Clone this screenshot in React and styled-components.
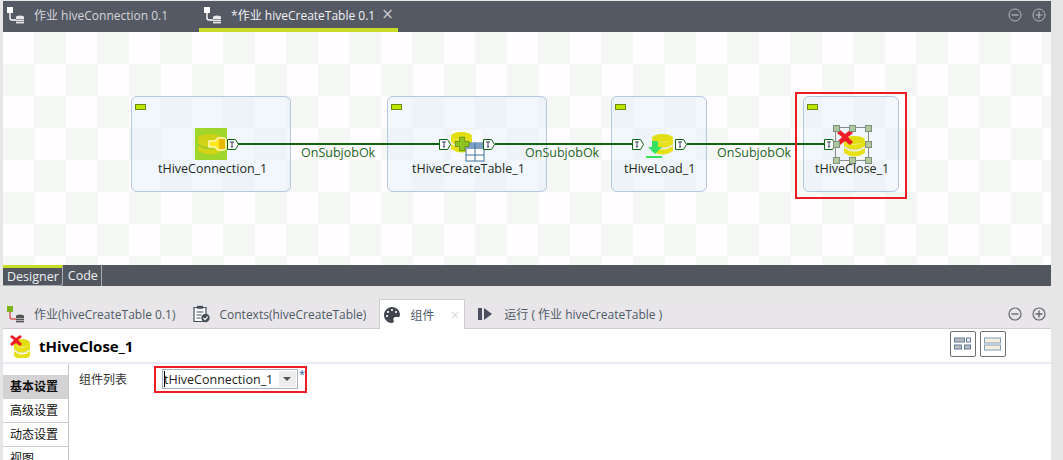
import styled, { createGlobalStyle } from 'styled-components';
import { FaPalette } from 'react-icons/fa';

const GlobalStyle = createGlobalStyle`
    html, body {
        margin: 0;
        padding: 0;
        background: #e6e6e6;
        overflow: hidden;
    }
`;

const FONT = `"Open Sans", "Noto Sans CJK SC", sans-serif`;

const Page = styled.div`
    width: 1063px;
    height: 460px;
    overflow: hidden;
    padding: 1px 12px 0 3px;
    box-sizing: border-box;
    display: flex;
    flex-direction: column;
    font-family: ${FONT};
    font-size: 12px;
`;

const EditorTabs = styled.div`
    height: 31px;
    flex: none;
    background: #555964;
    display: flex;
    align-items: stretch;
    position: relative;
`;

const EditorTab = styled.div`
    display: flex;
    align-items: center;
    gap: 10px;
    box-sizing: border-box;
    padding: ${p => (p.$active ? '0 4px 4px 5px' : '0 31px 4px 4px')};
    color: ${p => (p.$active ? '#f2f3f5' : '#d4d6da')};
    border-bottom: 4px solid ${p => (p.$active ? '#c8dc28' : 'transparent')};
    white-space: nowrap;
    height: 31px;
    padding-bottom: 0;
`;

const CloseMark = styled.span`
    color: ${p => p.$color};
    font-size: 15px;
    line-height: 1;
    margin-left: -4px;
    font-family: "DejaVu Sans", sans-serif;
`;

const WindowButtons = styled.div`
    margin-left: auto;
    display: flex;
    align-items: center;
    gap: 10px;
    padding: 0 5px 3px 0;
`;

const Canvas = styled.div`
    height: 233px;
    flex: none;
    position: relative;
    background-color: #fffdff;
    background-image: conic-gradient(#f5f7f5 25%, transparent 0 50%, #f5f7f5 0 75%, transparent 0);
    background-size: 63px 64px;
`;

const Node = styled.div`
    position: absolute;
    left: ${p => p.$x - 3}px;
    top: 64px;
    width: ${p => p.$w}px;
    height: 96px;
    box-sizing: border-box;
    border: 1px solid #b4c7dc;
    border-radius: 6px;
    background: rgba(232, 240, 252, 0.55);
`;

const Collapse = styled.span`
    position: absolute;
    left: 3px;
    top: 7px;
    width: 9px;
    height: 4px;
    background: #bce600;
    border: 1px solid #6d8a10;
`;

const NodeLabel = styled.div`
    position: absolute;
    left: ${p => p.$x - 3}px;
    top: 128px;
    line-height: 18px;
    font-size: 12.5px;
    color: #1c2a22;
    white-space: nowrap;
`;

const Link = styled.div`
    position: absolute;
    left: ${p => p.$x - 3}px;
    top: 111px;
    width: ${p => p.$w}px;
    height: 2px;
    background: #0f6410;
`;

const LinkLabel = styled.div`
    position: absolute;
    left: ${p => p.$x - 3}px;
    top: 112px;
    line-height: 18px;
    font-size: 12.5px;
    color: #1f641f;
    white-space: nowrap;
`;

const Port = styled.svg`
    position: absolute;
    left: ${p => p.$x - 3}px;
    top: 106px;
`;

const CanvasIcon = styled.svg`
    position: absolute;
    left: ${p => p.$x - 3}px;
    top: ${p => p.$y - 32}px;
`;

const Selection = styled.div`
    position: absolute;
    left: 832px;
    top: 95px;
    width: 32px;
    height: 32px;
    border: 1px solid #8a8a8a;
`;

const Handle = styled.span`
    position: absolute;
    left: ${p => p.$l}px;
    top: ${p => p.$t}px;
    width: 5px;
    height: 5px;
    background: #b0c8a0;
    border: 1px solid #7f8f7a;
`;

const RedFrame = styled.div`
    position: absolute;
    left: 792px;
    top: 60px;
    width: 112px;
    height: 107px;
    box-sizing: border-box;
    border: 2px solid #ec1c24;
`;

const DesignerBar = styled.div`
    height: 21px;
    flex: none;
    background: #52575f;
    display: flex;
    color: #eef0f2;
    font-size: 12.5px;
`;

const DesignerTab = styled.div`
    box-sizing: border-box;
    height: 21px;
    display: flex;
    align-items: center;
    padding: ${p => (p.$active ? '0 3px 0 4px' : '0 3px 0 5px')};
    border-top: ${p => (p.$active ? '3px solid #c8dc28' : '0')};
    border-right: 1px solid #a8acb2;
    border-bottom: ${p => (p.$active ? '1px solid #a8acb2' : '0')};
    border-bottom-right-radius: ${p => (p.$active ? '3px' : '0')};
`;

const LowerPanel = styled.div`
    margin-top: 13px;
    flex: 1;
    min-height: 0;
    display: flex;
    flex-direction: column;
    background: #fff;
`;

const ViewTabs = styled.div`
    height: 30px;
    flex: none;
    box-sizing: border-box;
    background: #e9e6e9;
    border-bottom: 1px solid #cfcdd1;
    display: flex;
    color: #4e5a68;
`;

const ViewTab = styled.div`
    display: flex;
    align-items: center;
    gap: ${p => p.$gap}px;
    margin-right: ${p => p.$mr}px;
    margin-left: ${p => p.$ml || 0}px;
    padding: ${p => p.$pad};
    white-space: nowrap;
    box-sizing: border-box;
    height: 30px;
    ${p => p.$active && `
        background: #fff;
        border: 1px solid #cfcdd1;
        border-bottom: 0;
    `}
`;

const Palette = styled(FaPalette)`
    width: 16px;
    height: 16px;
    color: #42464f;
`;

const FadedClose = styled.span`
    color: #dcdcdc;
    font-size: 13px;
    margin-left: 5px;
    font-family: "DejaVu Sans", sans-serif;
`;

const ViewButtons = styled.div`
    margin-left: auto;
    display: flex;
    align-items: center;
    gap: 10px;
    padding-right: 5px;
`;

const TitleRow = styled.div`
    height: 33px;
    flex: none;
    display: flex;
    align-items: center;
    gap: 6px;
    padding-left: 7px;
    border-bottom: 2px solid #e8eaf6;
`;

const Title = styled.div`
    font-weight: 700;
    font-size: 15px;
    color: #000;
`;

const LayoutButtons = styled.div`
    margin-left: auto;
    display: flex;
    gap: 4px;
    padding-right: 45px;
    margin-top: -4px;
`;

const LayoutButton = styled.div`
    width: 24px;
    height: 24px;
    border: 1px solid #6f6f6f;
    border-radius: 2px;
    display: flex;
    align-items: center;
    justify-content: center;
`;

const Body = styled.div`
    flex: 1;
    display: flex;
    min-height: 0;
`;

const SideNav = styled.div`
    width: 66px;
    flex: none;
    box-sizing: border-box;
    border-right: 1px solid #c8c8c8;
    padding-top: 11px;
`;

const SideItem = styled.div`
    height: 24px;
    box-sizing: border-box;
    padding-left: 7px;
    line-height: 23px;
    border-bottom: 1px solid #cfcfcf;
    color: #111;
    font-weight: ${p => (p.$active ? 700 : 400)};
    background: ${p => (p.$active ? '#d4d2d4' : '#fff')};
`;

const Form = styled.div`
    display: flex;
    align-items: flex-start;
    gap: 27px;
    padding: 2px 0 0 10px;
`;

const FieldLabel = styled.div`
    color: #333;
    line-height: 27px;
    margin-top: 0;
`;

const FieldFrame = styled.div`
    width: 153px;
    height: 27px;
    box-sizing: border-box;
    border: 2px solid #ec1c24;
    padding: 1px 0 0 6px;
    display: flex;
`;

const Combo = styled.div`
    width: 139px;
    height: 20px;
    box-sizing: border-box;
    border: 1px solid #a8b0bc;
    display: flex;
    align-items: center;
    padding: 0 1px 0 1px;
    color: #222;
    font-size: 12.5px;
`;

const Caret = styled.span`
    width: 1px;
    height: 16px;
    background: #000;
    flex: none;
    margin-right: -1px;
`;

const ComboArrow = styled.div`
    margin-left: auto;
    width: 17px;
    height: 16px;
    background: #ececec;
    display: flex;
    align-items: center;
    justify-content: center;
    &::after {
        content: '';
        border-left: 4px solid transparent;
        border-right: 4px solid transparent;
        border-top: 4px solid #555;
    }
`;

const Star = styled.span`
    color: #2a5fa8;
    font-size: 11px;
    line-height: 10px;
    margin-left: 1px;
`;

function JobIcon({ color = '#fff', link = '#fff', disk = '#e8e8e8' }) {
    return (
        <svg width="17" height="18" viewBox="0 0 17 18">
            <rect x="0" y="1" width="6" height="6" fill={color} />
            <path d="M3 7v5q0 2 2 2h4" stroke={link} strokeWidth="1.4" fill="none" />
            <ellipse cx="13" cy="11" rx="4" ry="1.6" fill={disk} />
            <rect x="9" y="11" width="8" height="2" fill={disk} />
            <rect x="9" y="13.6" width="8" height="1.6" fill={disk} />
            <rect x="9" y="15.8" width="8" height="1.6" fill={disk} />
        </svg>
    );
}

function RoundButton({ kind, color, fill = 'none', width = 1 }) {
    return (
        <svg width="14" height="14" viewBox="0 0 14 14">
            <circle cx="7" cy="7" r="6" stroke={color} strokeWidth={width} fill={fill} />
            <path d={kind === 'plus' ? 'M3.5 7h7M7 3.5v7' : 'M3.5 7h7'} stroke={color} strokeWidth={width + 0.2} />
        </svg>
    );
}

function Db({ size = 22, top = '#e2de10', mid = '#e6e015', dark = '#b8b40a' }) {
    return (
        <g>
            <ellipse cx={size / 2} cy="5" rx={size / 2} ry="4" fill={top} />
            <path d={`M0 6q${size / 2} 7 ${size} 0v5q-${size / 2} 7 -${size} 0z`} fill={mid} />
            <path d={`M0 11q${size / 2} 7 ${size} 0v1q-${size / 2} 7 -${size} 0z`} fill={dark} opacity="0.35" />
            <path d={`M0 13q${size / 2} 7 ${size} 0v5q-${size / 2} 7 -${size} 0z`} fill={mid} />
        </g>
    );
}

function PortMark({ x }) {
    return (
        <Port $x={x} width="13" height="13" viewBox="0 0 13 13">
            <path d="M.5 1.5h8l3 5-3 5h-8z" fill="#fff" stroke="#0f6410" />
            <path d="M3 4h4M5 4v5M4 9h2" stroke="#22304a" strokeWidth="0.9" fill="none" />
        </Port>
    );
}

const HANDLES = [
    [-3, -3], [13, -3], [29, -3],
    [-3, 13], [29, 13],
    [-3, 29], [13, 29], [29, 29],
];

export default function App() {
    return (
        <Page>
            <GlobalStyle />
            <EditorTabs>
                <EditorTab>
                    <JobIcon />
                    <span>作业 hiveConnection 0.1</span>
                </EditorTab>
                <EditorTab $active>
                    <JobIcon />
                    <span>*作业 hiveCreateTable 0.1</span>
                    <CloseMark $color="#c8cad0">×</CloseMark>
                </EditorTab>
                <WindowButtons>
                    <RoundButton kind="minus" color="#b4b7be" />
                    <RoundButton kind="plus" color="#b4b7be" />
                </WindowButtons>
            </EditorTabs>

            <Canvas>
                <Node $x={131} $w={160}><Collapse /></Node>
                <Node $x={387} $w={160}><Collapse /></Node>
                <Node $x={611} $w={96}><Collapse /></Node>
                <Node $x={803} $w={96}><Collapse /></Node>

                <Link $x={238} $w={202} />
                <Link $x={495} $w={138} />
                <Link $x={687} $w={138} />

                <CanvasIcon $x={195} $y={128} width="32" height="32" viewBox="0 0 32 32">
                    <rect width="32" height="32" fill="#9fd62c" />
                    <g transform="translate(3 5)"><Db size={24} top="#cfd018" mid="#d4d416" dark="#9aa010" /></g>
                    <path d="M14 13h6l3-3h5q3 0 3 3v6q0 3-3 3h-5l-3-3h-6z" fill="#ffe81a" stroke="#fff6b0" strokeWidth="1.6" />
                    <rect x="24" y="11" width="6" height="10" fill="#e6b800" />
                </CanvasIcon>
                <CanvasIcon $x={451} $y={130} width="34" height="32" viewBox="0 0 34 32">
                    <rect width="32" height="30" fill="#fff" opacity="0.6" />
                    <g transform="translate(0 1)"><Db size={21} /></g>
                    <rect x="15" y="13" width="18" height="18" fill="#fff" stroke="#3f6f9f" />
                    <rect x="15" y="13" width="18" height="6" fill="#7d9fc4" />
                    <path d="M15 25h18M24 13v18" stroke="#3f6f9f" />
                    <path d="M9 12h6v5h5v6h-5v5H9v-5H4v-6h5z" transform="translate(1 -3) scale(0.85)" fill="#8fc31f" stroke="#5f8a10" />
                </CanvasIcon>
                <CanvasIcon $x={646} $y={133} width="28" height="26" viewBox="0 0 28 26">
                    <g transform="translate(6 0)"><Db size={21} /></g>
                    <path d="M6 8h6v6h4l-7 7-7-7h4z" fill="#38e060" />
                    <rect x="0" y="23" width="16" height="2" fill="#38e060" />
                </CanvasIcon>
                <CanvasIcon $x={843} $y={134} width="23" height="25" viewBox="0 0 23 25">
                    <g transform="translate(1 1)"><Db size={21} /></g>
                </CanvasIcon>
                <CanvasIcon $x={837} $y={130} width="16" height="15" viewBox="0 0 16 15">
                    <path d="M3 0l5 4 5-4 3 3-5 4 5 5-3 3-5-4-5 4-3-3 5-5-5-4z" fill="#ee1c25" />
                </CanvasIcon>

                <PortMark x={227} />
                <PortMark x={439} />
                <PortMark x={483} />
                <PortMark x={632} />
                <PortMark x={675} />
                <PortMark x={824} />

                <Selection>
                    {HANDLES.map(([l, t]) => <Handle key={`${l}-${t}`} $l={l} $t={t} />)}
                </Selection>

                <NodeLabel $x={158}>tHiveConnection_1</NodeLabel>
                <NodeLabel $x={412}>tHiveCreateTable_1</NodeLabel>
                <NodeLabel $x={624}>tHiveLoad_1</NodeLabel>
                <NodeLabel $x={815}>tHiveClose_1</NodeLabel>

                <LinkLabel $x={301}>OnSubjobOk</LinkLabel>
                <LinkLabel $x={525}>OnSubjobOk</LinkLabel>
                <LinkLabel $x={717}>OnSubjobOk</LinkLabel>

                <RedFrame />
            </Canvas>

            <DesignerBar>
                <DesignerTab $active>Designer</DesignerTab>
                <DesignerTab>Code</DesignerTab>
            </DesignerBar>

            <LowerPanel>
                <ViewTabs>
                    <ViewTab $gap={10} $mr={18} $pad="0 0 0 4px">
                        <JobIcon color="#7cb518" link="#d9534f" disk="#555" />
                        <span>作业(hiveCreateTable 0.1)</span>
                    </ViewTab>
                    <ViewTab $gap={9} $mr={13} $pad="0">
                        <svg width="17" height="18" viewBox="0 0 17 18">
                            <path d="M1 2.5h12v14H1z" fill="#fff" stroke="#46505c" strokeWidth="1.2" />
                            <rect x="4" y="0.8" width="6" height="3" fill="#46505c" />
                            <path d="M3.5 7h7M3.5 10h5M3.5 13h4" stroke="#46505c" />
                            <circle cx="12.5" cy="13" r="4.2" fill="#46505c" />
                            <path d="M10.5 13l1.6 1.6 2.6-3" stroke="#fff" strokeWidth="1.2" fill="none" />
                        </svg>
                        <span>Contexts(hiveCreateTable)</span>
                    </ViewTab>
                    <ViewTab $active $gap={10} $mr={13} $pad="0 4px 0 4px">
                        <Palette />
                        <span>组件</span>
                        <FadedClose>×</FadedClose>
                    </ViewTab>
                    <ViewTab $gap={11} $mr={0} $pad="0">
                        <svg width="15" height="14" viewBox="0 0 15 14">
                            <rect x="0" y="1" width="4" height="12" fill="#4a5060" />
                            <path d="M6 1l8 6-8 6z" fill="#4a5060" />
                        </svg>
                        <span>运行 ( 作业 hiveCreateTable )</span>
                    </ViewTab>
                    <ViewButtons>
                        <RoundButton kind="minus" color="#666a70" fill="#e9e6e9" width={1.2} />
                        <RoundButton kind="plus" color="#666a70" fill="#e9e6e9" width={1.2} />
                    </ViewButtons>
                </ViewTabs>

                <TitleRow>
                    <svg width="23" height="24" viewBox="0 0 23 24">
                        <g transform="translate(4 4)"><Db size={16} /></g>
                        <path d="M2 1l4 3 4-3 2 2-4 3 4 4-2 2-4-3-4 3-2-2 4-4-4-3z" fill="#ee1c25" />
                    </svg>
                    <Title>tHiveClose_1</Title>
                    <LayoutButtons>
                        <LayoutButton>
                            <svg width="18" height="16" viewBox="0 0 18 16">
                                <rect x=".5" y="2" width="10" height="4" fill="#bbb" stroke="#5f7f9f" />
                                <rect x="12.5" y="2" width="4" height="4" fill="#eee" stroke="#5f7f9f" />
                                <rect x=".5" y="9" width="7" height="4" fill="#bbb" stroke="#5f7f9f" />
                                <rect x="10.5" y="9" width="6" height="4" fill="#bbb" stroke="#5f7f9f" />
                            </svg>
                        </LayoutButton>
                        <LayoutButton>
                            <svg width="18" height="16" viewBox="0 0 18 16">
                                <rect x=".5" y="2" width="16" height="5" fill="#f4efdf" stroke="#7f9fb8" />
                                <rect x=".5" y="9" width="16" height="5" fill="#f4efdf" stroke="#7f9fb8" />
                            </svg>
                        </LayoutButton>
                    </LayoutButtons>
                </TitleRow>

                <Body>
                    <SideNav>
                        <SideItem $active>基本设置</SideItem>
                        <SideItem>高级设置</SideItem>
                        <SideItem>动态设置</SideItem>
                        <SideItem>视图</SideItem>
                    </SideNav>
                    <Form>
                        <FieldLabel>组件列表</FieldLabel>
                        <FieldFrame>
                            <Combo>
                                <Caret />
                                <span>tHiveConnection_1</span>
                                <ComboArrow />
                            </Combo>
                            <Star>*</Star>
                        </FieldFrame>
                    </Form>
                </Body>
            </LowerPanel>
        </Page>
    );
}
